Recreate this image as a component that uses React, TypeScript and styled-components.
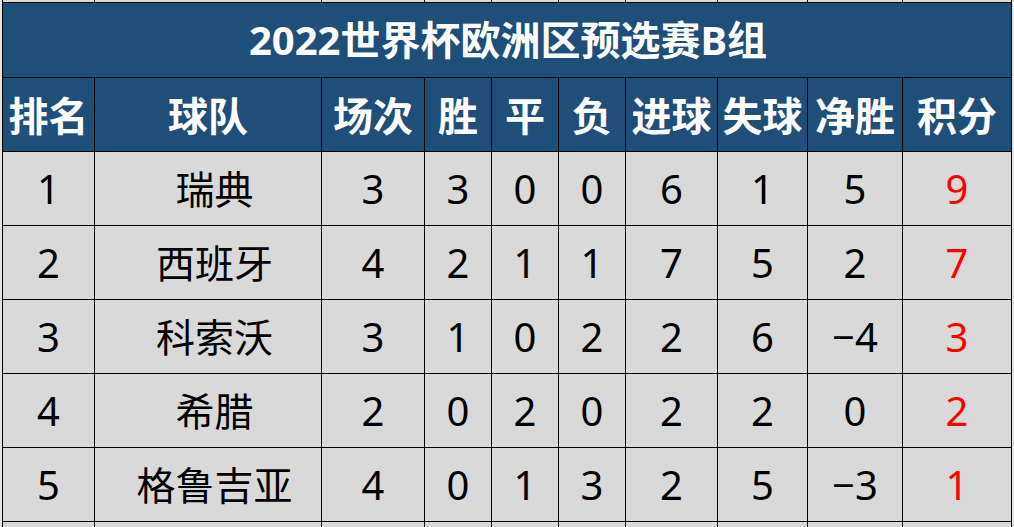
import React from "react";
import styled, { createGlobalStyle } from "styled-components";

const Global = createGlobalStyle`
  html, body {
    margin: 0;
    padding: 0;
    background: #e4e4e4;
    overflow: hidden;
  }
  body {
    font-family: "Noto Sans", "Noto Sans CJK SC", sans-serif;
  }
`;

const Page = styled.div`
  width: 1014px;
  height: 527px;
  overflow: hidden;
  padding-left: 2px;
  box-sizing: border-box;
`;

const Grid = styled.div`
  display: grid;
  width: fit-content;
  grid-template-columns: 91px 226px 102px 66px 66px 66px 91px 89px 94px 108px;
  grid-template-rows: 2px 74px 73px 73px 73px 73px 73px 73px 12px;
  gap: 1px;
  background: #000;
  border-left: 1px solid #000;
  border-right: 1px solid #000;
`;

const Strip = styled.div`
  background: #d9d9d9;
`;

const Title = styled.div`
  grid-column: 1 / -1;
  background: #1f4e79;
  color: #fff;
  font-weight: 700;
  font-size: 40px;
  display: flex;
  align-items: center;
  justify-content: center;
  line-height: 1;
  padding-left: 2px;
`;

const Head = styled.div`
  background: #1f4e79;
  color: #fff;
  font-weight: 700;
  font-size: 40px;
  display: flex;
  align-items: center;
  justify-content: center;
  line-height: 1;
  white-space: nowrap;
  padding-top: 3px;
`;

const Cell = styled.div<{ $red?: boolean; $team?: boolean }>`
  background: #d9d9d9;
  color: ${(p) => (p.$red ? "#ff0000" : "#000")};
  font-size: ${(p) => (p.$team ? "39px" : "40px")};
  padding-left: ${(p) => (p.$team ? "13px" : "0")};
  display: flex;
  align-items: center;
  justify-content: center;
  line-height: 1;
  white-space: nowrap;
`;

const headers = ["排名", "球队", "场次", "胜", "平", "负", "进球", "失球", "净胜", "积分"];

const rows: (string | number)[][] = [
  [1, "瑞典", 3, 3, 0, 0, 6, 1, 5, 9],
  [2, "西班牙", 4, 2, 1, 1, 7, 5, 2, 7],
  [3, "科索沃", 3, 1, 0, 2, 2, 6, "−4", 3],
  [4, "希腊", 2, 0, 2, 0, 2, 2, 0, 2],
  [5, "格鲁吉亚", 4, 0, 1, 3, 2, 5, "−3", 1],
];

export default function App() {
  return (
    <Page>
      <Global />
      <Grid>
        {headers.map((_, i) => (
          <Strip key={`t${i}`} />
        ))}
        <Title>2022世界杯欧洲区预选赛B组</Title>
        {headers.map((h) => (
          <Head key={h}>{h}</Head>
        ))}
        {rows.map((r, ri) =>
          r.map((v, ci) => (
            <Cell key={`${ri}-${ci}`} $red={ci === 9} $team={ci === 1}>
              {v}
            </Cell>
          ))
        )}
        {headers.map((_, i) => (
          <Strip key={`b${i}`} />
        ))}
      </Grid>
    </Page>
  );
}
